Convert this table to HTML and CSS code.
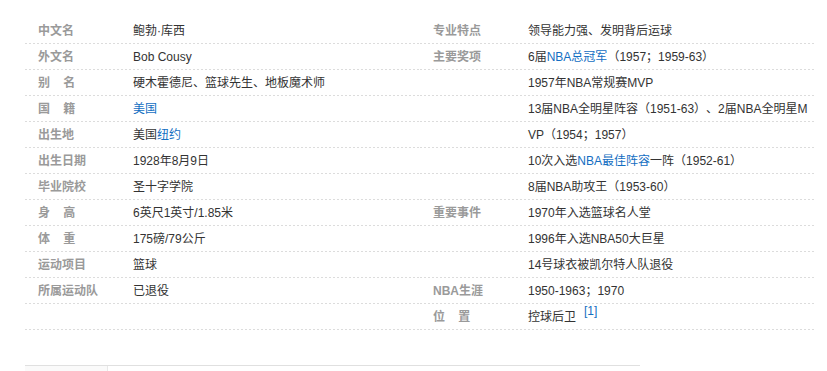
FILE: index.html
```html
<!DOCTYPE html>
<html lang="zh-CN">
<head>
<meta charset="utf-8">
<title>鲍勃·库西</title>
<link rel="stylesheet" href="styles.css">
</head>
<body>
<div class="page">
  <div class="basic-info">
    <dl class="block">
      <div class="item"><dt class="name">中文名</dt><dd class="value">鲍勃·库西</dd></div>
      <div class="item"><dt class="name">外文名</dt><dd class="value">Bob Cousy</dd></div>
      <div class="item"><dt class="name">别&nbsp;&nbsp;&nbsp;&nbsp;名</dt><dd class="value">硬木霍德尼、篮球先生、地板魔术师</dd></div>
      <div class="item"><dt class="name">国&nbsp;&nbsp;&nbsp;&nbsp;籍</dt><dd class="value"><a class="link" href="#">美国</a></dd></div>
      <div class="item"><dt class="name">出生地</dt><dd class="value">美国<a class="link" href="#">纽约</a></dd></div>
      <div class="item"><dt class="name">出生日期</dt><dd class="value">1928年8月9日</dd></div>
      <div class="item"><dt class="name">毕业院校</dt><dd class="value">圣十字学院</dd></div>
      <div class="item"><dt class="name">身&nbsp;&nbsp;&nbsp;&nbsp;高</dt><dd class="value">6英尺1英寸/1.85米</dd></div>
      <div class="item"><dt class="name">体&nbsp;&nbsp;&nbsp;&nbsp;重</dt><dd class="value">175磅/79公斤</dd></div>
      <div class="item"><dt class="name">运动项目</dt><dd class="value">篮球</dd></div>
      <div class="item"><dt class="name">所属运动队</dt><dd class="value">已退役</dd></div>
    </dl>
    <dl class="block">
      <div class="item"><dt class="name">专业特点</dt><dd class="value">领导能力强、发明背后运球</dd></div>
      <div class="item"><dt class="name">主要奖项</dt><dd class="value">6届<a class="link" href="#">NBA总冠军</a>（1957；1959-63）<br>1957年NBA常规赛MVP<br>13届NBA全明星阵容（1951-63）、2届NBA全明星MVP（1954；1957）<br>10次入选<a class="link" href="#">NBA最佳阵容</a>一阵（1952-61）<br>8届NBA助攻王（1953-60）</dd></div>
      <div class="item"><dt class="name">重要事件</dt><dd class="value">1970年入选篮球名人堂<br>1996年入选NBA50大巨星<br>14号球衣被凯尔特人队退役</dd></div>
      <div class="item"><dt class="name">NBA生涯</dt><dd class="value">1950-1963；1970</dd></div>
      <div class="item"><dt class="name">位&nbsp;&nbsp;&nbsp;&nbsp;置</dt><dd class="value">控球后卫<sup class="ref"><a class="link" href="#">[1]</a></sup></dd></div>
    </dl>
  </div>
  <div class="catalog">
    <div class="catalog-title"></div>
    <div class="catalog-list"></div>
  </div>
</div>
</body>
</html>
```
FILE: styles.css
```css
html, body {
  margin: 0;
  padding: 0;
  background: #fff;
  overflow: hidden;
}
body {
  font-family: "Liberation Sans", Arial, "Noto Sans CJK SC", sans-serif;
  font-size: 12px;
  color: #333;
  text-spacing-trim: space-all;
}
.page {
  padding: 18px 0 0 25px;
}
.basic-info {
  display: flex;
  height: 312px;
  margin-bottom: 35px;
}
.block {
  width: 395px;
  margin: 0;
  padding: 0;
  background-image: url("data:image/svg+xml,%3Csvg xmlns='http://www.w3.org/2000/svg' width='4' height='26'%3E%3Crect x='0' y='25' width='2' height='1' fill='%23dcdcdc'/%3E%3C/svg%3E");
  background-repeat: repeat;
}
.item {
  display: flex;
  line-height: 26px;
}
.name {
  width: 90px;
  padding: 0 5px 0 13px;
  font-weight: bold;
  color: #9a9a9a;
  white-space: nowrap;
  overflow: hidden;
}
.value {
  margin: 0;
  width: 280px;
  word-break: break-all;
}
.link {
  color: #136ec2;
  text-decoration: none;
}
.ref {
  font-size: 12px;
  line-height: 0;
  margin-left: 8px;
  position: relative;
  top: -1px;
}
.catalog {
  display: flex;
  width: 615px;
  height: 5px;
  border-top: 1px solid #e0e0e0;
}
.catalog-title {
  width: 82px;
  background: #fafafa;
  border-right: 1px solid #e8e8e8;
}
.catalog-list {
  flex: 1;
}
```
